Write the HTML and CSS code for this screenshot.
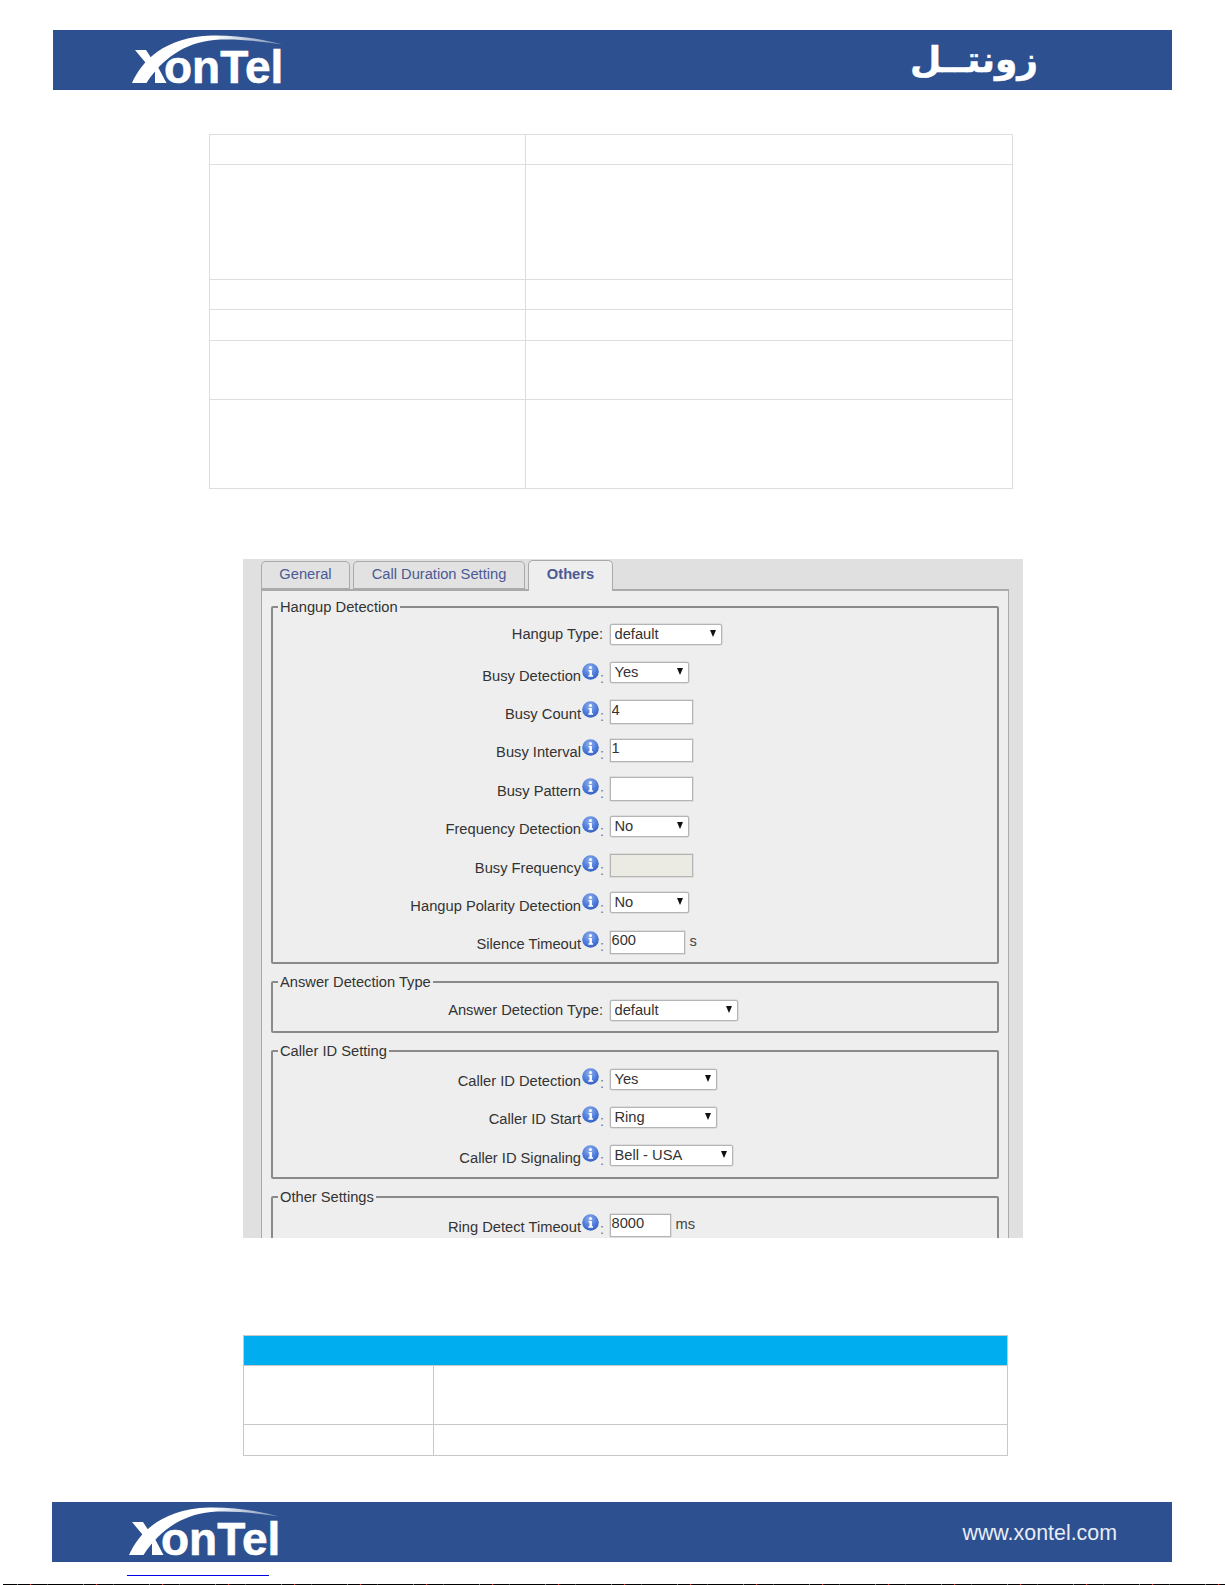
FILE: index.html
```html
<!DOCTYPE html>
<html lang="en">
<head>
<meta charset="utf-8">
<title>XonTel</title>
<link rel="stylesheet" href="styles.css">
</head>
<body>
<svg class="defs" width="0" height="0" aria-hidden="true">
  <defs>
    <linearGradient id="tail" x1="0" x2="1" y1="0" y2="0">
      <stop offset="0.55" stop-color="#fff"/>
      <stop offset="1" stop-color="#fff" stop-opacity="0.35"/>
    </linearGradient>
    <radialGradient id="ball" cx="0.45" cy="0.3" r="0.8">
      <stop offset="0" stop-color="#8fb0ee"/>
      <stop offset="0.6" stop-color="#4a78d8"/>
      <stop offset="1" stop-color="#2a55b8"/>
    </radialGradient>
    <symbol id="info" viewBox="0 0 17 17">
      <circle cx="8.5" cy="8.5" r="8.3" fill="url(#ball)"/>
      <circle cx="8.5" cy="4.4" r="1.5" fill="#fff"/>
      <path d="M6.6 6.9h3.3v5.4h1.2v1.5H6.3v-1.5h1.2V8.4H6.6z" fill="#fff"/>
    </symbol>
  </defs>
</svg>

<header class="banner banner-top">
  <svg class="logo" viewBox="0 0 150 50" role="img" aria-label="XonTel">
    <path d="M0 48C10 26 32 2 80 0.5C105 0 130 4 150 9.5C125 5.5 100 3.5 82 5C52 8 30 24 14.500 48Z" fill="url(#tail)"/>
    <path d="M3 15H14L22.500 28L18 33Z M23 36L26 32L34.500 48H23Z" fill="#fff"/>
    <text x="32" y="48" class="logo-text">onTel</text>
  </svg>
  <span class="arabic" lang="ar" dir="rtl">زونتــل</span>
</header>

<table class="spec">
  <tr class="h30"><td class="spec-key"></td><td></td></tr>
  <tr class="h115"><td></td><td></td></tr>
  <tr class="h30"><td></td><td></td></tr>
  <tr class="h31"><td></td><td></td></tr>
  <tr class="h59"><td></td><td></td></tr>
  <tr class="h90"><td></td><td></td></tr>
</table>

<section class="panel">
  <nav class="tabs">
    <a class="tab tab-general">General</a>
    <a class="tab tab-call">Call Duration Setting</a>
    <a class="tab tab-others">Others</a>
  </nav>
  <div class="content">
    <fieldset class="group">
      <legend>Hangup Detection</legend>
      <div class="row">
        <div class="label plain">Hangup Type:</div>
        <span class="sel w112"><select><option>default</option></select></span>
      </div>
      <div class="row">
        <div class="label"><span class="name">Busy Detection</span><svg class="info"><use href="#info"/></svg><span class="colon">:</span></div>
        <span class="sel w79"><select><option>Yes</option></select></span>
      </div>
      <div class="row">
        <div class="label"><span class="name">Busy Count</span><svg class="info"><use href="#info"/></svg><span class="colon">:</span></div>
        <input class="field w83" value="4">
      </div>
      <div class="row">
        <div class="label"><span class="name">Busy Interval</span><svg class="info"><use href="#info"/></svg><span class="colon">:</span></div>
        <input class="field w83" value="1">
      </div>
      <div class="row">
        <div class="label"><span class="name">Busy Pattern</span><svg class="info"><use href="#info"/></svg><span class="colon">:</span></div>
        <input class="field w83" value="">
      </div>
      <div class="row">
        <div class="label"><span class="name">Frequency Detection</span><svg class="info"><use href="#info"/></svg><span class="colon">:</span></div>
        <span class="sel w79"><select><option>No</option></select></span>
      </div>
      <div class="row">
        <div class="label"><span class="name">Busy Frequency</span><svg class="info"><use href="#info"/></svg><span class="colon">:</span></div>
        <input class="field w83 off" disabled value="">
      </div>
      <div class="row">
        <div class="label"><span class="name">Hangup Polarity Detection</span><svg class="info"><use href="#info"/></svg><span class="colon">:</span></div>
        <span class="sel w79"><select><option>No</option></select></span>
      </div>
      <div class="row">
        <div class="label"><span class="name">Silence Timeout</span><svg class="info"><use href="#info"/></svg><span class="colon">:</span></div>
        <input class="field w75" value="600"><span class="unit">s</span>
      </div>
    </fieldset>

    <fieldset class="group group-answer">
      <legend>Answer Detection Type</legend>
      <div class="row">
        <div class="label plain">Answer Detection Type:</div>
        <span class="sel w128"><select><option>default</option></select></span>
      </div>
    </fieldset>

    <fieldset class="group">
      <legend>Caller ID Setting</legend>
      <div class="row">
        <div class="label"><span class="name">Caller ID Detection</span><svg class="info"><use href="#info"/></svg><span class="colon">:</span></div>
        <span class="sel w107"><select><option>Yes</option></select></span>
      </div>
      <div class="row">
        <div class="label"><span class="name">Caller ID Start</span><svg class="info"><use href="#info"/></svg><span class="colon">:</span></div>
        <span class="sel w107"><select><option>Ring</option></select></span>
      </div>
      <div class="row">
        <div class="label"><span class="name">Caller ID Signaling</span><svg class="info"><use href="#info"/></svg><span class="colon">:</span></div>
        <span class="sel w123"><select><option>Bell - USA</option></select></span>
      </div>
    </fieldset>

    <fieldset class="group group-other">
      <legend>Other Settings</legend>
      <div class="row">
        <div class="label"><span class="name">Ring Detect Timeout</span><svg class="info"><use href="#info"/></svg><span class="colon">:</span></div>
        <input class="field w61" value="8000"><span class="unit">ms</span>
      </div>
    </fieldset>
  </div>
</section>

<table class="spec2">
  <colgroup><col class="spec2-key"><col></colgroup>
  <tr class="h30"><th colspan="2"></th></tr>
  <tr class="h59"><td></td><td></td></tr>
  <tr class="h31"><td></td><td></td></tr>
</table>

<footer class="banner banner-bottom">
  <svg class="logo" viewBox="0 0 150 50" role="img" aria-label="XonTel">
    <path d="M0 48C10 26 32 2 80 0.5C105 0 130 4 150 9.5C125 5.5 100 3.5 82 5C52 8 30 24 14.500 48Z" fill="url(#tail)"/>
    <path d="M3 15H14L22.500 28L18 33Z M23 36L26 32L34.500 48H23Z" fill="#fff"/>
    <text x="32" y="48" class="logo-text">onTel</text>
  </svg>
  <span class="site">www.xontel.com</span>
</footer>
<div class="link-line"></div>
<div class="edge-line"></div>
</body>
</html>
```
FILE: styles.css
```css
html, body {
  margin: 0;
  padding: 0;
  background: #fff;
}
body {
  width: 1225px;
  height: 1585px;
  overflow: hidden;
  font-family: "Liberation Sans", Arial, sans-serif;
  font-size: 14.7px;
  color: #333;
}
.defs { position: absolute; }

/* banners */
.banner {
  display: flex;
  align-items: flex-start;
  justify-content: space-between;
  height: 60px;
  background: #2d5090;
  color: #fff;
}
.banner-top {
  margin: 30px 53px 0;
  width: 1119px;
  padding: 5px 134px 0 79px;
  box-sizing: border-box;
}
.banner-bottom {
  margin: 46px 53px 0 52px;
  width: 1120px;
  padding: 5px 55px 0 77px;
  box-sizing: border-box;
}
.logo {
  display: block;
  width: 150px;
  height: 50px;
  overflow: visible;
}
.logo-text {
  font-family: "Liberation Sans", Arial, sans-serif;
  font-weight: 700;
  font-size: 46px;
  fill: #fff;
  stroke: #fff;
  stroke-width: 0.6px;
}
.arabic {
  font-family: "DejaVu Sans", sans-serif;
  font-weight: 700;
  font-size: 36px;
  line-height: 46px;
  margin-top: 2px;
  color: #fff;
  -webkit-text-stroke: 0.5px #fff;
}
.site {
  font-size: 21.4px;
  line-height: 24px;
  margin-top: 14px;
  color: #e8edf6;
}

/* empty tables */
table {
  border-collapse: collapse;
  table-layout: fixed;
}
.spec {
  margin: 44px 0 0 209px;
  width: 804px;
}
.spec td {
  border: 1px solid #dedede;
  padding: 0;
}
.spec-key { width: 315px; }
.h30 { height: 30px; }
.h31 { height: 31px; }
.h59 { height: 59px; }
.h90 { height: 89px; }
.h115 { height: 115px; }

.spec2 {
  margin: 97px 0 0 243px;
  width: 765px;
}
.spec2 td, .spec2 th {
  border: 1px solid #c8c8c8;
  padding: 0;
}
.spec2 th { background: #00aeef; }
.spec2-key { width: 190px; }

/* screenshot panel */
.panel {
  box-sizing: border-box;
  margin: 70px 0 0 243px;
  width: 780px;
  height: 679px;
  padding: 1px 14px 0 18px;
  overflow: hidden;
  background: #e0e0e0;
}
.tabs {
  display: flex;
  align-items: flex-end;
  gap: 3px;
  height: 30px;
  position: relative;
  z-index: 1;
}
.tab {
  box-sizing: border-box;
  height: 29px;
  padding-top: 4px;
  text-align: center;
  color: #4c5a94;
  background: #e2e2e2;
  border: 1px solid #aaa;
  border-bottom: 2px solid #aaa;
  border-radius: 5px 5px 0 0;
}
.tab-general { width: 89px; }
.tab-call { width: 172px; }
.tab-others {
  width: 85px;
  height: 31px;
  padding-top: 5px;
  margin-bottom: -1px;
  font-weight: 700;
  background: #eee;
  border-bottom: 0;
}
.content {
  box-sizing: border-box;
  width: 748px;
  height: 700px;
  margin-top: -1px;
  padding: 8px 9px 0;
  background: #eee;
  border: 1px solid #aaa;
  border-top-width: 2px;
}
.group {
  margin: 0 0 10px;
  padding: 1px 0 2px;
  min-width: 0;
  border: 2px solid #8a8a8a;
  border-radius: 2px;
}
.group:first-child { padding-bottom: 0; }
.group:first-child .sel { margin-top: -2px; }
.group-answer { padding: 2px 0 1px; }
.group-other { padding: 1px 0 1px; }
.group legend {
  margin-left: 5px;
  padding: 0 2px;
  font-size: 14.7px;
  line-height: 16px;
}
.row {
  display: flex;
  align-items: center;
  height: 38.4px;
}
.label {
  display: flex;
  align-items: flex-start;
  justify-content: flex-end;
  box-sizing: border-box;
  width: 333px;
  margin-right: 3.5px;
  flex: none;
  height: 20px;
}
.label.plain {
  line-height: 20px;
  margin-top: -2px;
  padding-right: 3px;
}
.name {
  line-height: 20px;
  margin: 2px 1px 0 0;
}
.info {
  width: 17px;
  height: 17px;
  flex: none;
  margin-top: -1px;
}
.colon {
  width: 6px;
  margin-left: 1px;
  line-height: 20px;
  margin-top: 4px;
  color: #777;
}

/* controls */
.sel {
  position: relative;
  display: block;
  height: 21px;
}
.sel select {
  appearance: none;
  display: block;
  width: 100%;
  height: 21px;
  box-sizing: border-box;
  margin: 0;
  padding: 0 0 1px 4px;
  font: 14.7px "Liberation Sans", Arial, sans-serif;
  color: #333;
  background: #fff;
  border: 1px solid #b4b4b4;
  border-radius: 2px;
  box-shadow: 0 0 0 0.5px #ccc;
}
.sel::after {
  content: "";
  position: absolute;
  right: 6px;
  top: 6px;
  border-style: solid;
  border-width: 7px 3.500px 0;
  border-color: #111 transparent transparent;
}
.field {
  display: block;
  box-sizing: border-box;
  height: 23.5px;
  margin: 0;
  padding: 0 1px 4px;
  font: 14.7px "Liberation Sans", Arial, sans-serif;
  color: #333;
  background: #fff;
  border: 1px solid #b4b4b4;
  box-shadow: 0 0 0 0.5px #ccc;
  outline: 0;
}
.field.off {
  background: #ebebe4;
}
.unit {
  margin: -2px 0 0 5px;
  color: #444;
}
.w61 { width: 61px; }
.w75 { width: 75px; }
.w79 { width: 79px; }
.w83 { width: 83px; }
.w107 { width: 107px; }
.w112 { width: 112px; }
.w123 { width: 123px; }
.w128 { width: 128px; }

/* bottom marks */
.link-line {
  margin: 13px 0 0 127px;
  width: 142px;
  height: 1px;
  background: #0000e8;
}
.edge-line {
  margin: 8px 0 0 3px;
  height: 1px;
  background: repeating-linear-gradient(90deg, #000 0 14px, #2a6 14px 15px, #000 15px 27px, #d33 27px 28px, #000 28px 44px, #33d 44px 45px, #000 45px 66px);
}
```
